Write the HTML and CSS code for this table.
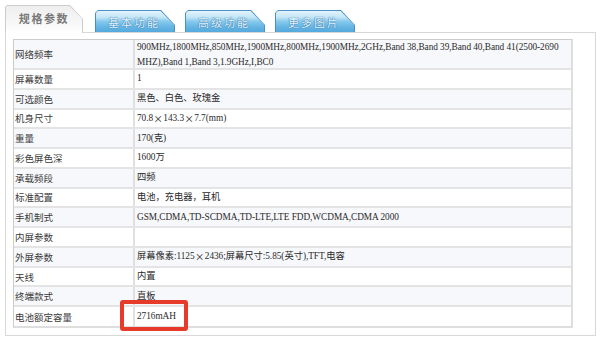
FILE: index.html
```html
<!DOCTYPE html>
<html lang="zh-CN">
<head>
<meta charset="utf-8">
<link rel="stylesheet" href="styles.css">
</head>
<body>
<div class="wrap">
  <div class="tabs">
    <div class="tab-active"><div class="tab-active-in">规格参数</div></div>
    <div class="btab first"><div class="btab-in">基本功能</div></div>
    <div class="btab"><div class="btab-in">高级功能</div></div>
    <div class="btab"><div class="btab-in">更多图片</div></div>
  </div>
  <div class="panel">
    <div class="spec">
      <div class="row tall odd"><div class="lab">网络频率</div><div class="val">900MHz,1800MHz,850MHz,1900MHz,800MHz,1900MHz,2GHz,Band 38,Band 39,Band 40,Band 41(2500-2690<br>MHZ),Band 1,Band 3,1.9GHz,I,BC0</div></div>
      <div class="row"><div class="lab">屏幕数量</div><div class="val">1</div></div>
      <div class="row odd"><div class="lab">可选颜色</div><div class="val">黑色、白色、玫瑰金</div></div>
      <div class="row"><div class="lab">机身尺寸</div><div class="val">70.8<span class="x">×</span>143.3<span class="x">×</span>7.7(mm)</div></div>
      <div class="row odd"><div class="lab">重量</div><div class="val">170(克)</div></div>
      <div class="row"><div class="lab">彩色屏色深</div><div class="val">1600万</div></div>
      <div class="row odd"><div class="lab">承载频段</div><div class="val">四频</div></div>
      <div class="row"><div class="lab">标准配置</div><div class="val">电池，充电器，耳机</div></div>
      <div class="row odd"><div class="lab">手机制式</div><div class="val">GSM,CDMA,TD-SCDMA,TD-LTE,LTE FDD,WCDMA,CDMA 2000</div></div>
      <div class="row"><div class="lab">内屏参数</div><div class="val"></div></div>
      <div class="row odd"><div class="lab">外屏参数</div><div class="val">屏幕像素:1125<span class="x">×</span>2436;屏幕尺寸:5.85(英寸),TFT,电容</div></div>
      <div class="row"><div class="lab">天线</div><div class="val">内置</div></div>
      <div class="row odd"><div class="lab">终端款式</div><div class="val">直板</div></div>
      <div class="row last"><div class="lab">电池额定容量</div><div class="val">2716mAH</div></div>
    </div>
  </div>
</div>
<div class="highlight"></div>
</body>
</html>
```

FILE: styles.css
```css
html, body {
  margin: 0;
  padding: 0;
  background: #ffffff;
}
body {
  font-family: "Liberation Serif", "Noto Sans CJK SC", serif;
  font-size: 9.3px;
  color: #2a2a2a;
  width: 600px;
  height: 338px;
  overflow: hidden;
  position: relative;
}
.wrap {
  padding: 5px 0 0 5px;
  width: 591px;
}
.tabs {
  display: flex;
  align-items: flex-end;
  height: 28px;
}
.tab-active {
  position: relative;
  z-index: 2;
  width: 78px;
  height: 28px;
  box-sizing: border-box;
  padding: 1px 1px 0 1px;
  background: #cccccc;
  clip-path: polygon(0 2px, 2px 0, 65px 0, 78px 14px, 78px 100%, 0 100%);
}
.tab-active-in {
  height: 100%;
  background: linear-gradient(#eeeeee, #f7f7f7 60%, #ffffff);
  clip-path: polygon(0 1px, 1px 0, 63.6px 0, 76px 12.4px, 76px 100%, 0 100%);
  font-family: "Noto Sans CJK SC", sans-serif;
  font-weight: bold;
  font-size: 11px;
  letter-spacing: 1.6px;
  color: #787878;
  display: flex;
  align-items: center;
  justify-content: center;
  padding-bottom: 3px;
  box-sizing: border-box;
}
.btab {
  width: 80px;
  height: 22px;
  margin-left: 10px;
  margin-bottom: 1px;
  box-sizing: border-box;
  padding: 1px 1px 0 1px;
  background: #4a8fc6;
  clip-path: polygon(0 3px, 3px 0, 66px 0, 80px 15px, 80px 100%, 0 100%);
}
.btab.first {
  margin-left: 12px;
}
.btab-in {
  height: 100%;
  background: linear-gradient(#e3f4fc 0%, #c3e6f7 30%, #86c9ec 50%, #66b6e4 75%, #55a9dc 100%);
  clip-path: polygon(0 2px, 2px 0, 64.6px 0, 78px 13.4px, 78px 100%, 0 100%);
  font-family: "Noto Sans CJK SC", sans-serif;
  font-size: 11px;
  letter-spacing: 2px;
  color: #e4f4fc;
  text-shadow: 0 0 1px #3373aa, 0 0 1px #3373aa;
  display: flex;
  align-items: center;
  justify-content: center;
  padding-right: 2px;
  box-sizing: border-box;
}
.panel {
  margin-top: -1px;
  border: 1px solid #d8d8d8;
  padding: 6px 22px 7px 7px;
  height: 289px;
}
.spec {
  width: 560px;
  height: 289px;
  box-sizing: border-box;
  border: 1px solid #cccccc;
  border-right: 2px solid #dedede;
  border-bottom: 2px solid #dedede;
  display: flex;
  flex-direction: column;
}
.row {
  display: flex;
  height: 19.77px;
  flex: none;
  box-sizing: border-box;
  border-bottom: 2px solid #e4e4e4;
  background: #ffffff;
}
.row.odd {
  background: #f7f8fb;
}
.row.tall {
  height: 30px;
}
.row.last {
  border-bottom: none;
  flex: 1;
}
.lab {
  width: 121px;
  flex: none;
  box-sizing: border-box;
  border-right: 2px solid #e0e0e0;
  padding-left: 1px;
  display: flex;
  align-items: center;
  font-family: "Noto Sans CJK SC", sans-serif;
  font-size: 9.5px;
  color: #3a3a3a;
}
.val {
  flex: 1;
  padding-left: 2px;
  display: flex;
  align-items: center;
  line-height: 15px;
  white-space: nowrap;
  letter-spacing: -0.05px;
}
.x {
  font-family: "Noto Sans CJK SC", sans-serif;
  margin: 0 0.5px;
}
.row.tall .val {
  display: block;
}
.highlight {
  position: absolute;
  left: 120px;
  top: 300px;
  width: 68px;
  height: 31px;
  box-sizing: border-box;
  border: 4px solid #e63a2b;
  border-radius: 3px;
}
```
